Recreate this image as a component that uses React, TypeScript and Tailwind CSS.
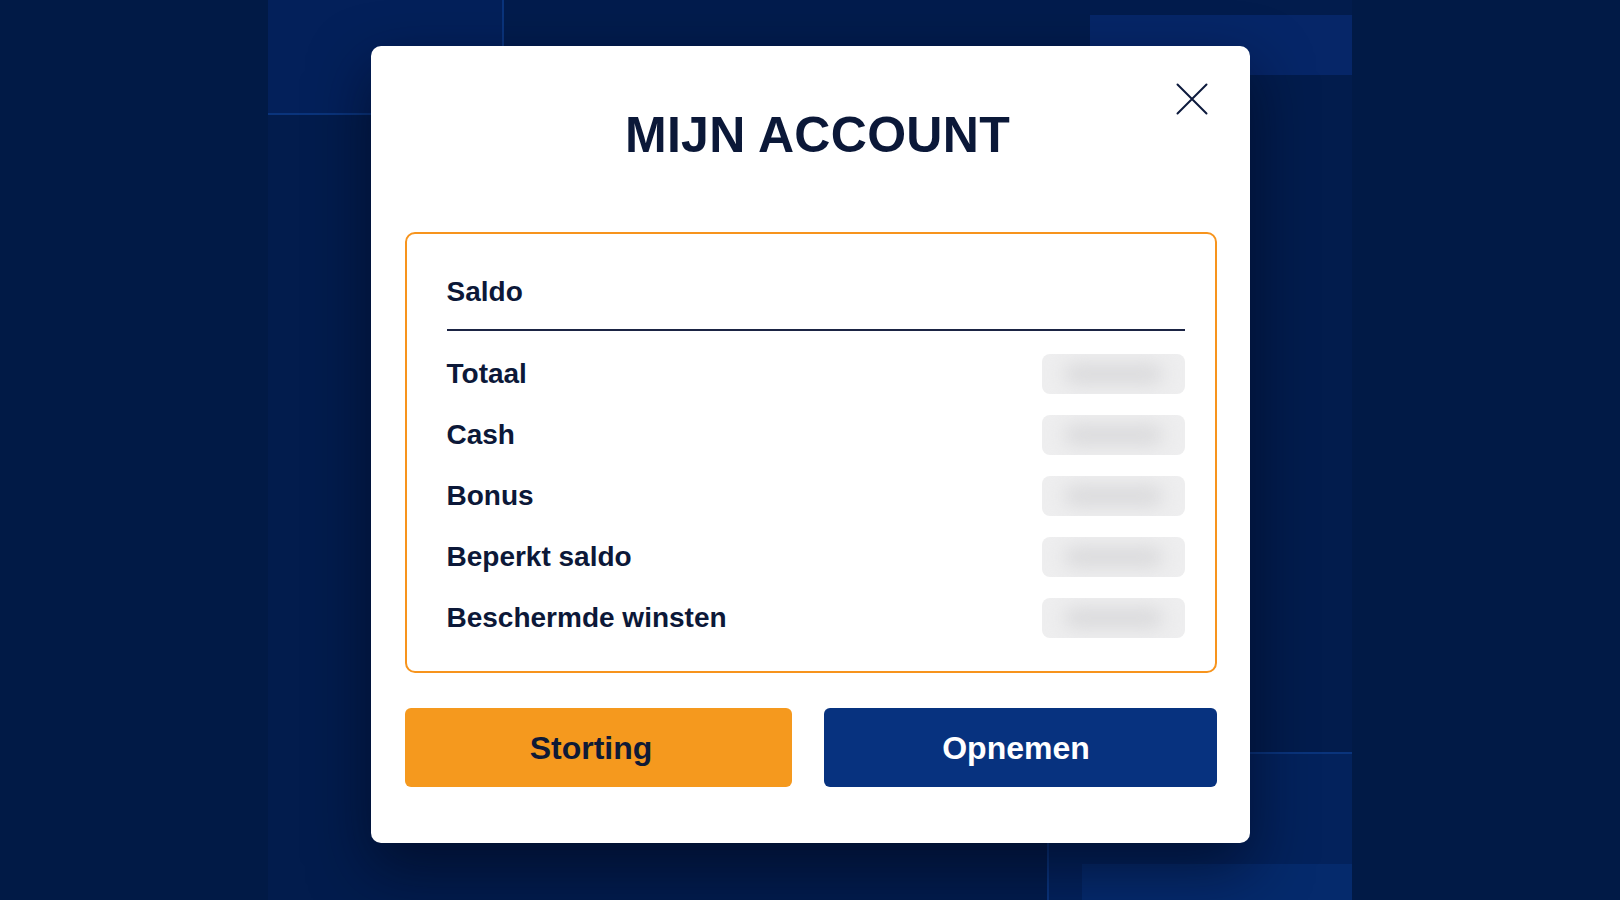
const rows = ['Totaal', 'Cash', 'Bonus', 'Beperkt saldo', 'Beschermde winsten'];

function BlurredValue() {
  return (
    <div className="relative w-[143px] h-[40px] rounded-lg bg-[#eeeeef] overflow-hidden blur-[0.6px]">
      <div className="absolute inset-x-[22px] inset-y-[10px] rounded-full bg-[#d9d9db] blur-[9px]" />
    </div>
  );
}

function CloseIcon() {
  return (
    <svg width="32" height="32" viewBox="0 0 32 32" fill="none">
      <path d="M1.5 1.5 L30.5 30.5 M30.5 1.5 L1.5 30.5" stroke="#0d1a3d" strokeWidth="2" strokeLinecap="round" />
    </svg>
  );
}

export default function App() {
  return (
    <div className="relative w-full h-[900px] overflow-hidden bg-[#011a46] font-['Liberation_Sans',Arial,sans-serif]">
      {/* background panels */}
      <div className="absolute left-[268px] top-0 w-[1084px] h-[900px] bg-[#021c4d]" />
      <div className="absolute left-[268px] top-0 w-[236px] h-[115px] bg-[#03205a] border-r-2 border-b-2 border-[#0a347c]" />
      <div className="absolute left-[1090px] top-[15px] w-[262px] h-[60px] bg-[#062668]" />
      <div className="absolute left-[1047px] top-[752px] w-[305px] h-[148px] bg-[#03225c] border-t-2 border-l-2 border-[#0a347c]" />
      <div className="absolute left-[1082px] top-[864px] w-[270px] h-[36px] bg-[#052a6c]" />

      <div className="relative flex justify-center pt-[46px]">
        <div className="relative w-[879px] bg-white rounded-[10px] shadow-[0_24px_60px_rgba(0,6,25,0.6)] pl-[34px] pr-[33px] pt-[64px] pb-[56px]">
          <button className="absolute right-[42px] top-[37px]">
            <CloseIcon />
          </button>

          <h1 className="pl-[14px] text-center text-[50px] leading-none font-bold text-[#0b1838] tracking-[0.3px]">
            MIJN ACCOUNT
          </h1>

          <div className="mt-[72px] border-2 border-[#f7941d] rounded-[10px] pl-[40px] pr-[30px] pt-[44px] pb-[33px]">
            <div className="text-[28px] leading-none font-bold text-[#0c1838]">Saldo</div>
            <div className="mt-[23px] h-[2px] bg-[#1b2444]" />
            <div className="mt-[23px] flex flex-col gap-[21px]">
              {rows.map((r) => (
                <div key={r} className="flex items-center justify-between h-[40px]">
                  <span className="text-[28px] leading-none font-bold text-[#0c1838]">{r}</span>
                  <BlurredValue />
                </div>
              ))}
            </div>
          </div>

          <div className="mt-[35px] grid grid-cols-[387px_1fr] gap-[32px]">
            <button className="h-[79px] rounded-md bg-[#f5991e] pr-[14px] text-[32px] font-bold text-[#0f1a36]">
              Storting
            </button>
            <button className="h-[79px] rounded-md bg-[#07327f] pr-[8px] text-[32px] font-bold text-white">
              Opnemen
            </button>
          </div>
        </div>
      </div>
    </div>
  );
}
